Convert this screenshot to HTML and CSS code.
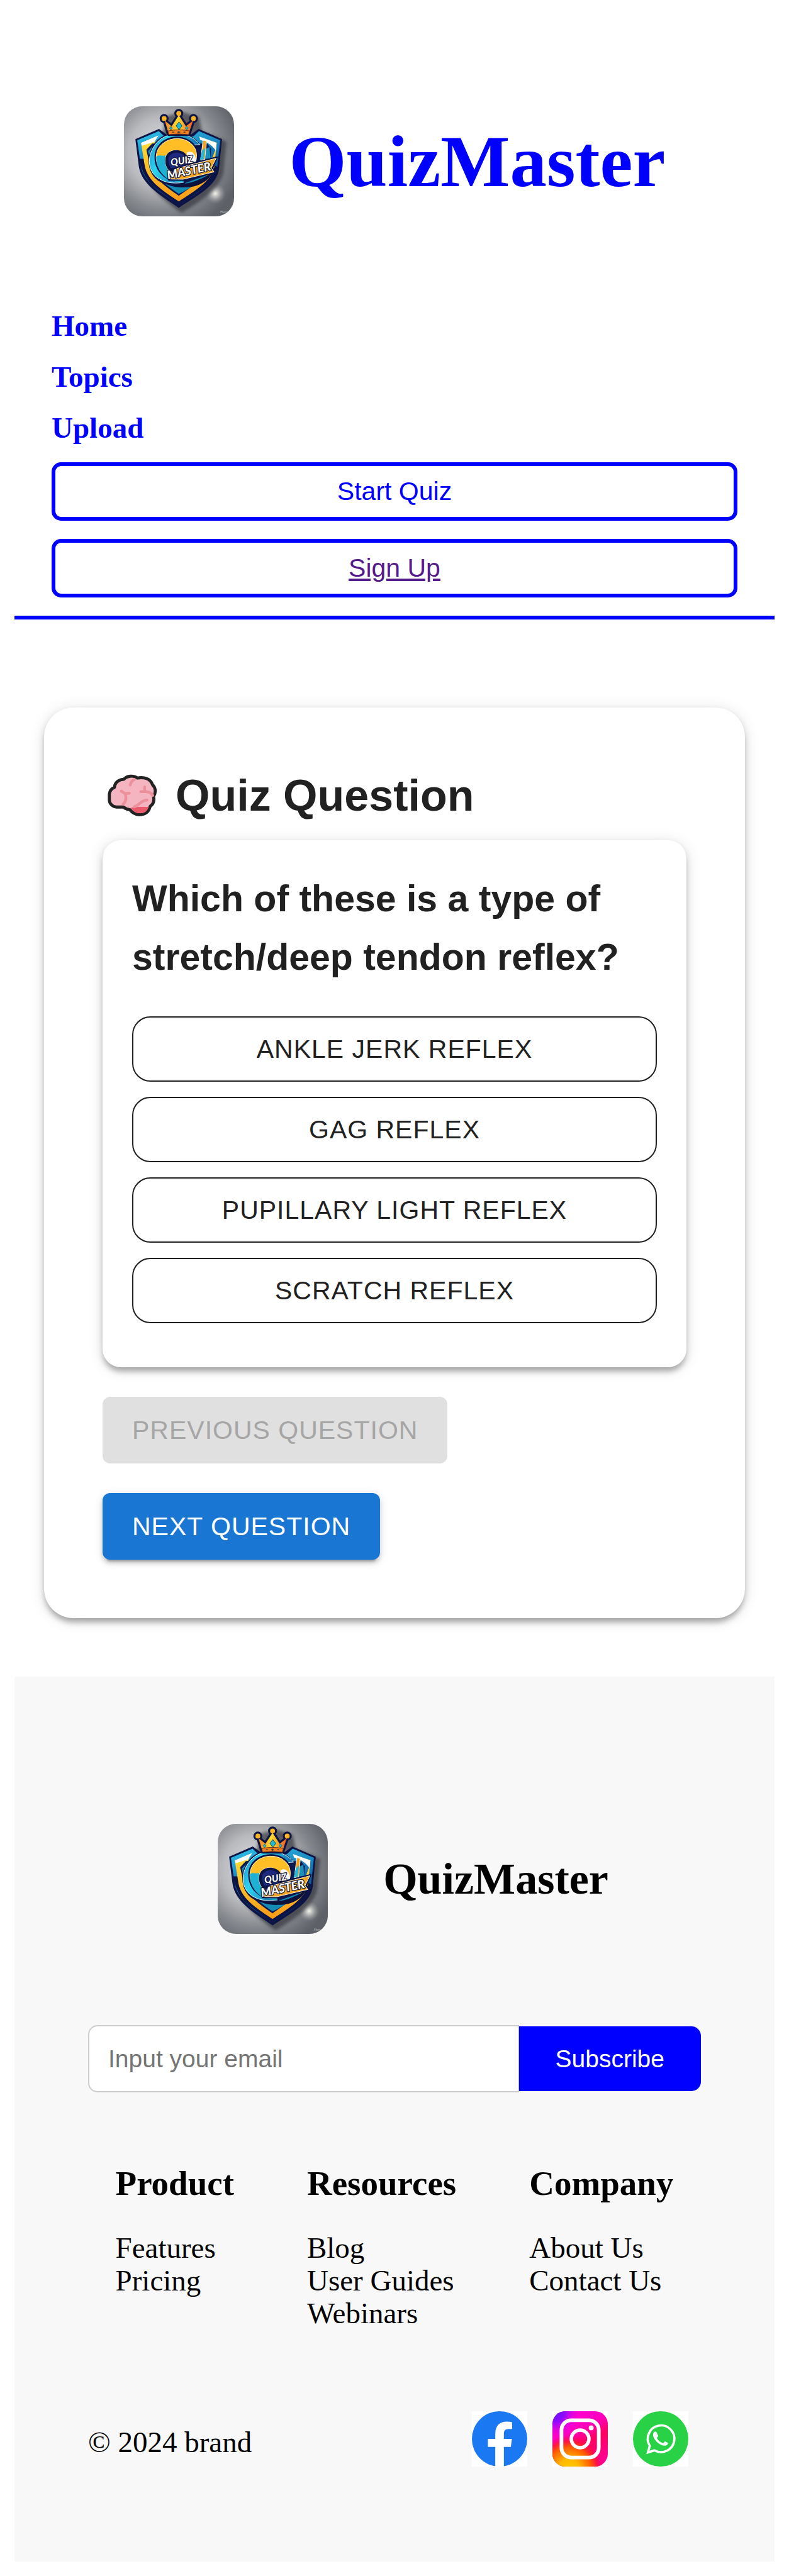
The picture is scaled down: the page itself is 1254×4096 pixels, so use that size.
FILE: index.html
```html
<!DOCTYPE html>
<html lang="en">
<head>
<meta charset="utf-8">
<meta name="viewport" content="width=device-width, initial-scale=1">
<title>QuizMaster</title>
<link rel="stylesheet" href="styles.css">
</head>
<body>
<svg class="defs" width="0" height="0" aria-hidden="true">
  <defs>
    <radialGradient id="lg-bg" cx="0.36" cy="0.42" r="0.72">
      <stop offset="0" stop-color="#e4e4e8"/>
      <stop offset="0.45" stop-color="#b9babd"/>
      <stop offset="0.72" stop-color="#85888d"/>
      <stop offset="1" stop-color="#5d6167"/>
    </radialGradient>
    <radialGradient id="lg-glow">
      <stop offset="0" stop-color="#f4f4ec"/>
      <stop offset="0.35" stop-color="#d8d8d4" stop-opacity="0.7"/>
      <stop offset="1" stop-color="#a0a0a4" stop-opacity="0"/>
    </radialGradient>
    <linearGradient id="lg-blue" x1="0" y1="0" x2="0.3" y2="1">
      <stop offset="0" stop-color="#2fc4ea"/>
      <stop offset="0.5" stop-color="#1677b8"/>
      <stop offset="1" stop-color="#0d2560"/>
    </linearGradient>
    <linearGradient id="lg-yellow" x1="0" y1="0" x2="0" y2="1">
      <stop offset="0" stop-color="#ffe03a"/>
      <stop offset="1" stop-color="#f99a17"/>
    </linearGradient>
    <linearGradient id="lg-ring" x1="0" y1="0" x2="1" y2="0.4">
      <stop offset="0" stop-color="#2a86c4"/>
      <stop offset="0.35" stop-color="#2bd5f0"/>
      <stop offset="1" stop-color="#1460a8"/>
    </linearGradient>
    <linearGradient id="lg-crown" x1="0" y1="0" x2="1" y2="0">
      <stop offset="0" stop-color="#f5821f"/>
      <stop offset="0.45" stop-color="#ffdc2e"/>
      <stop offset="1" stop-color="#ee5a24"/>
    </linearGradient>
    <filter id="lg-soft" x="-20%" y="-20%" width="140%" height="140%"><feGaussianBlur stdDeviation="9"/></filter>
    <symbol id="logo" viewBox="42 42 540 540">
      <rect x="42" y="42" width="540" height="540" fill="url(#lg-bg)"/>
      <circle cx="490" cy="470" r="50" fill="url(#lg-glow)"/>
      <path d="M125 210L235 165L250 90L330 70L410 95L425 165L545 215L530 370C505 450 420 510 325 565C230 500 150 430 130 330Z" fill="#34363c" opacity="0.7" filter="url(#lg-soft)"/>
      <path d="M98 203L214 153L250 180H372L408 153L523 203L508 350C498 432 400 482 311 540C222 480 124 424 114 330Z" fill="#0b1445"/>
      <path d="M107 209L213 164L240 190H382L410 164L514 209L499 345C489 420 400 470 311 526C225 468 134 416 124 326Z" fill="url(#lg-blue)"/>
      <path d="M118 300C125 350 150 410 200 445L311 526L430 445C470 420 495 385 500 340L485 330C472 408 392 456 311 509C230 454 152 408 142 300Z" fill="#0b1445"/>
      <path d="M126 222L205 188L192 222L160 250L178 370L311 474L440 390L492 250L478 215L415 190L497 221L485 340C472 408 392 456 311 509C230 454 152 408 142 322Z" fill="url(#lg-yellow)"/>
      <path d="M126 222L212 185L190 217L130 236Z" fill="#fff"/>
      <path d="M411 190L496 222L493 260C470 225 440 215 416 207Z" fill="#fff"/>
      <path d="M152 255L180 225H450L470 250L462 330C440 395 370 440 311 481C250 438 176 390 166 318Z" fill="#0b1a52"/>
      <path d="M160 262L180 240L205 372L311 430L450 380C420 415 360 447 311 472C254 430 184 388 174 318Z" fill="#138bb5"/>
      <path d="M205 380C250 430 340 452 480 365L455 398C410 440 360 440 330 440C260 440 225 415 205 380Z" fill="#0a123c"/>
      <path d="M418 306L430 208L447 212L440 302Z" fill="#f7a21c" stroke="#fff" stroke-width="3"/>
      <path d="M414 306L426 258L440 246L434 302Z" fill="#29b8d8"/>
      <path d="M446 250L462 242L466 300H440Z" fill="#1593bd"/>
      <path d="M412 235C365 165 250 160 200 225C150 290 165 375 225 408C260 428 300 424 336 420L335 393L360 305L378 312L396 240Z" fill="#0b1445" stroke="#0b1445" stroke-width="14" stroke-linejoin="round"/>
      <path d="M414 230C365 165 255 160 202 222C145 290 160 372 222 402C258 422 300 420 334 416V388C250 400 195 340 197 285C202 205 320 165 380 232Z" fill="url(#lg-ring)" stroke="#e9fbff" stroke-width="3"/>
      <path d="M192 290C195 180 355 155 400 250C410 278 406 300 402 312L350 320L334 416C245 418 190 360 192 290Z" fill="#0b1445"/>
      <path d="M200 290C203 192 350 167 392 252C402 278 398 300 394 312L350 320C355 278 322 252 285 258C242 266 236 310 250 340C260 365 285 370 334 372V398C250 405 199 350 200 290Z" fill="#ffbe26" stroke="#fff3c8" stroke-width="3"/>
      <path d="M200 290C215 275 230 292 246 282C238 318 246 360 285 370H334V416C250 420 199 360 200 290Z" fill="#1fb1d4"/>
      <path d="M247 300C247 270 280 252 310 258C345 264 358 290 356 310L345 352H266C252 335 247 320 247 300Z" fill="#0b1445"/>
      <path d="M260 302C260 280 285 266 308 270C334 274 346 290 344 310L336 345H272C264 332 260 320 260 302Z" fill="#1d2a80"/>
      <path d="M350 270C372 256 394 272 396 312L358 322Z" fill="#f7f7fa"/>
      <path d="M286 348L498 292L476 345L492 367L335 404L262 403Z" fill="#0b1445" stroke="#0b1445" stroke-width="8" stroke-linejoin="round"/>
      <path d="M290 350L494 297L470 345L484 364L332 400L268 399Z" fill="#f6a623" stroke="#fffbe0" stroke-width="3"/>
      <g transform="rotate(-9 322 320)" font-family="Lato, 'Liberation Sans', sans-serif" font-weight="900" font-style="italic" fill="#fff" stroke="#0b1030" stroke-width="7" paint-order="stroke" stroke-linejoin="round">
        <text x="272" y="327" font-size="48">QUIZ</text>
      </g>
      <g transform="rotate(-12 262 400)" font-family="Lato, 'Liberation Sans', sans-serif" font-weight="900" font-style="italic" fill="#fff" stroke="#0b1030" stroke-width="7" paint-order="stroke" stroke-linejoin="round">
        <text x="258" y="400" font-size="58">MASTER</text>
      </g>
      <g stroke="#0b1445" stroke-width="20" stroke-linejoin="round" fill="#0b1445">
        <path d="M262 178L242 112L276 140L311 86L346 140L381 112L359 178Z"/>
        <circle cx="239" cy="102" r="12"/><circle cx="311" cy="77" r="12"/><circle cx="383" cy="102" r="12"/>
      </g>
      <path d="M262 178L242 112L276 140L311 86L346 140L381 112L359 178Z" fill="url(#lg-crown)"/>
      <path d="M258 163Q311 152 364 163L359 181Q311 174 262 181Z" fill="#f5821f" stroke="#6d2b12" stroke-width="3"/>
      <circle cx="239" cy="102" r="12" fill="#fbb321"/><circle cx="311" cy="77" r="12" fill="#fbb321"/><circle cx="383" cy="102" r="12" fill="#fbb321"/>
      <path d="M312 119L327 138L312 157L298 138Z" fill="#20b9d0" stroke="#11435f" stroke-width="3"/>
      <path d="M272 140L279 149L272 159L265 149ZM350 140L357 149L350 159L343 149Z" fill="#20b9d0" stroke="#11435f" stroke-width="2"/>
      <path d="M304 169H318M311 164V175M278 169H288M334 169H344" stroke="#20303f" stroke-width="4"/>
      <text x="514" y="567" font-family="'Liberation Sans', sans-serif" font-size="17" fill="#b4b6ba">Hero</text>
    </symbol>
  </defs>
</svg>

<header class="header">
  <div class="brand">
    <svg class="brand-logo" role="img" aria-label="QuizMaster logo"><use href="#logo"/></svg>
    <h1 class="brand-name">QuizMaster</h1>
  </div>
  <nav class="nav">
    <a class="nav-link" href="#home">Home</a>
    <a class="nav-link" href="#topics">Topics</a>
    <a class="nav-link" href="#upload">Upload</a>
    <button class="nav-button" type="button">Start Quiz</button>
    <a class="nav-button nav-signup" href="#signup">Sign Up</a>
  </nav>
</header>

<main class="quiz">
  <h2 class="quiz-title">
    <svg class="brain" viewBox="27 45 292 270" role="img" aria-label="Brain">
      <path d="M128 235H92C70 232 58 215 59 195V172C61 152 74 142 84 138C86 113 108 98 131 98C145 80 180 78 197 92C230 86 262 94 272 125C288 138 290 165 277 183C282 205 275 222 260 232C254 262 235 272 206 273C186 272 174 265 160 248C146 247 136 241 128 235Z" fill="#f4b4c0" stroke="#222" stroke-width="15" stroke-linejoin="round"/>
      <path d="M164 240C172 246 178 258 192 263Q210 268 228 263C242 258 248 246 254 234H185Z" fill="#ea5a6b"/>
      <g fill="none" stroke="#ec919b" stroke-width="14" stroke-linecap="round">
        <path d="M118 156L137 169L157 167M137 169C144 190 143 207 127 221" />
        <path d="M162 126C165 112 173 103 182 99"/>
        <path d="M214 159H242C258 160 267 168 273 178M233 136V157"/>
        <path d="M245 201C218 199 208 226 182 234"/>
      </g>
    </svg>
    <span>Quiz Question</span>
  </h2>
  <section class="question">
    <h3 class="question-text">Which of these is a type of stretch/deep tendon reflex?</h3>
    <div class="options">
      <button class="option" type="button">ANKLE JERK REFLEX</button>
      <button class="option" type="button">GAG REFLEX</button>
      <button class="option" type="button">PUPILLARY LIGHT REFLEX</button>
      <button class="option" type="button">SCRATCH REFLEX</button>
    </div>
  </section>
  <div class="steps">
    <button class="step" type="button" disabled>PREVIOUS QUESTION</button>
    <button class="step step-next" type="button">NEXT QUESTION</button>
  </div>
</main>

<footer class="footer">
  <div class="brand footer-brand">
    <svg class="brand-logo" role="img" aria-label="QuizMaster logo"><use href="#logo"/></svg>
    <h2 class="footer-name">QuizMaster</h2>
  </div>
  <form class="subscribe">
    <input class="email" type="email" placeholder="Input your email" aria-label="Input your email">
    <button class="subscribe-button" type="button">Subscribe</button>
  </form>
  <div class="links">
    <section>
      <h3 class="links-title">Product</h3>
      <ul class="links-list">
        <li><a href="#features">Features</a></li>
        <li><a href="#pricing">Pricing</a></li>
      </ul>
    </section>
    <section>
      <h3 class="links-title">Resources</h3>
      <ul class="links-list">
        <li><a href="#blog">Blog</a></li>
        <li><a href="#guides">User Guides</a></li>
        <li><a href="#webinars">Webinars</a></li>
      </ul>
    </section>
    <section>
      <h3 class="links-title">Company</h3>
      <ul class="links-list">
        <li><a href="#about">About Us</a></li>
        <li><a href="#contact">Contact Us</a></li>
      </ul>
    </section>
  </div>
  <div class="bottom">
    <p class="copyright">© 2024 brand</p>
    <div class="social">
      <a href="#facebook" aria-label="Facebook">
        <svg class="social-icon" viewBox="0 0 270 270">
          <rect width="270" height="270" fill="#fff"/>
          <circle cx="135" cy="135" r="135" fill="#1b78f3"/>
          <path d="M114 270V174H78V135H114V112C114 70 136 51 170 51Q186 51 196 54V87H178C162 87 156 96 156 110V135H195L190 174H156V270Z" fill="#fff"/>
        </svg>
      </a>
      <a href="#instagram" aria-label="Instagram">
        <svg class="social-icon" viewBox="0 0 270 270">
          <defs>
            <linearGradient id="ig-a" x1="0.1" y1="0" x2="0.6" y2="1">
              <stop offset="0" stop-color="#ff00dc"/>
              <stop offset="0.4" stop-color="#ff00c0"/>
              <stop offset="0.65" stop-color="#ff0060"/>
              <stop offset="1" stop-color="#ff0090"/>
            </linearGradient>
            <radialGradient id="ig-b" cx="0.3" cy="1.05" r="0.62">
              <stop offset="0" stop-color="#ffcc00"/>
              <stop offset="0.3" stop-color="#ffb800"/>
              <stop offset="0.65" stop-color="#ff5a00"/>
              <stop offset="0.82" stop-color="#ff1a30" stop-opacity="0.8"/>
              <stop offset="1" stop-color="#ff0060" stop-opacity="0"/>
            </radialGradient>
            <radialGradient id="ig-c" cx="0.04" cy="0.02" r="0.48">
              <stop offset="0" stop-color="#6a10ff"/>
              <stop offset="0.35" stop-color="#8a0cff"/>
              <stop offset="1" stop-color="#ff00dc" stop-opacity="0"/>
            </radialGradient>
          </defs>
          <rect width="270" height="270" fill="#fff"/>
          <rect width="270" height="270" rx="62" fill="url(#ig-a)"/>
          <rect width="270" height="270" rx="62" fill="url(#ig-b)"/>
          <rect width="270" height="270" rx="62" fill="url(#ig-c)"/>
          <rect x="44" y="44" width="182" height="182" rx="48" fill="none" stroke="#fff" stroke-width="18"/>
          <circle cx="135" cy="135" r="43" fill="none" stroke="#fff" stroke-width="17"/>
          <circle cx="189" cy="81" r="12" fill="#fff"/>
        </svg>
      </a>
      <a href="#whatsapp" aria-label="WhatsApp">
        <svg class="social-icon" viewBox="0 0 270 270">
          <rect width="270" height="270" fill="#fff"/>
          <circle cx="135" cy="135" r="135" fill="#29d146"/>
          <path d="M73 201L82 169A65 65 0 1 1 105 191Z" fill="none" stroke="#fff" stroke-width="11"/>
          <path d="M101 104C106 98 113 99 116 104L123 120C124 125 116 129 117 132C124 144 134 152 146 156C150 157 153 148 157 147L171 154C172 162 164 168 153 168C127 167 98 135 98 116Q98 109 101 104Z" fill="#fff"/>
        </svg>
      </a>
    </div>
  </div>
</footer>
</body>
</html>
```

FILE: styles.css
```css
* {
  box-sizing: border-box;
}

body {
  margin: 23px;
  background: #fff;
  color: #000;
  font-family: "Liberation Serif", "Times New Roman", serif;
  font-size: 47px;
  line-height: 52px;
}

h1, h2, h3, p, ul {
  margin: 0;
}

a {
  color: inherit;
  text-decoration: none;
}

button, input {
  font-family: "Liberation Sans", Arial, sans-serif;
}

.defs {
  display: block;
}

/* Header */

.header {
  padding: 146px 59px 29px;
  border-bottom: 6px solid #00f;
}

.brand {
  display: flex;
  justify-content: center;
  align-items: center;
  gap: 88px;
}

.brand-logo {
  width: 175px;
  height: 175px;
  border-radius: 29px;
}

.brand-name {
  color: #00f;
  font-size: 117px;
  line-height: 134px;
}

.nav {
  display: flex;
  flex-direction: column;
  gap: 29px;
  margin-top: 148px;
}

.nav-link {
  align-self: flex-start;
  color: #00f;
  font-weight: bold;
}

.nav-button {
  padding: 17px;
  border: 6px solid #00f;
  border-radius: 15px;
  background: transparent;
  color: #00f;
  font-family: "Liberation Sans", Arial, sans-serif;
  font-size: 41px;
  line-height: 47px;
  text-align: center;
}

.nav-signup {
  color: #551a8b;
  text-decoration: underline;
}

/* Quiz card */

.quiz {
  margin: 140px 47px 93px;
  padding: 93px;
  border-radius: 47px;
  background: #fff;
  box-shadow: 0 9px 9px -3px rgba(0, 0, 0, 0.2), 0 6px 12px rgba(0, 0, 0, 0.14), 0 3px 24px rgba(0, 0, 0, 0.12);
  color: #212121;
  font-family: "Liberation Sans", Arial, sans-serif;
}

.quiz-title {
  display: flex;
  align-items: center;
  gap: 21px;
  margin-bottom: 24px;
  font-size: 70px;
  line-height: 94px;
}

.brain {
  width: 95px;
  height: 87px;
}

.question {
  padding: 47px 47px 70px;
  border-radius: 29px;
  background: #fff;
  box-shadow: 0 9px 9px -3px rgba(0, 0, 0, 0.2), 0 6px 12px rgba(0, 0, 0, 0.14), 0 3px 24px rgba(0, 0, 0, 0.12);
}

.question-text {
  font-size: 59px;
  line-height: 93px;
}

.options {
  display: flex;
  flex-direction: column;
  gap: 24px;
  margin-top: 47px;
}

.option, .step {
  font-size: 41px;
  line-height: 70px;
  letter-spacing: 1px;
}

.option {
  padding: 15px 45px;
  border: 2px solid #212121;
  border-radius: 29px;
  background: transparent;
  color: #212121;
}

.steps {
  display: flex;
  flex-direction: column;
  align-items: flex-start;
  gap: 47px;
  margin-top: 47px;
}

.step {
  padding: 18px 47px;
  border: 0;
  border-radius: 12px;
  background: #e0e0e0;
  color: #a6a6a6;
}

.step-next {
  background: #1976d2;
  color: #fff;
  box-shadow: 0 9px 3px -6px rgba(0, 0, 0, 0.2), 0 6px 6px rgba(0, 0, 0, 0.14), 0 3px 15px rgba(0, 0, 0, 0.12);
}

/* Footer */

.footer {
  padding: 234px 117px 142px;
  background: #f8f8f8;
}

.footer-brand {
  margin-left: 59px;
}

.footer-name {
  font-size: 70px;
  line-height: 80px;
}

.subscribe {
  display: flex;
  align-items: center;
  margin-top: 145px;
}

.email {
  flex: 1;
  min-width: 0;
  height: 107px;
  padding: 0 30px;
  border: 2px solid #ccc;
  border-radius: 15px 0 0 15px;
  background: #fff;
  font-size: 39px;
}

.email::placeholder {
  color: #757575;
}

.subscribe-button {
  height: 103px;
  padding: 0 58px;
  border: 0;
  border-radius: 0 15px 15px 0;
  background: #00f;
  color: #fff;
  font-size: 39px;
}

.links {
  display: flex;
  justify-content: center;
  gap: 116px;
  margin-top: 113px;
}

.links-title {
  font-size: 55px;
  line-height: 64px;
}

.links-list {
  margin-top: 44px;
  padding: 0;
  list-style: none;
}

.bottom {
  display: flex;
  justify-content: space-between;
  align-items: center;
  margin-top: 130px;
}

.social {
  display: flex;
  gap: 40px;
  padding: 0 20px 9px 0;
}

.social-icon {
  display: block;
  width: 88px;
  height: 88px;
}
```
